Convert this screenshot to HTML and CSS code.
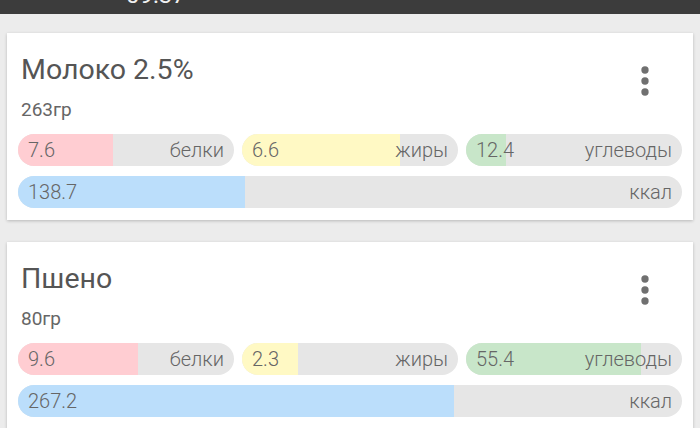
FILE: index.html
```html
<!DOCTYPE html>
<html lang="ru">
<head>
<meta charset="utf-8">
<link rel="stylesheet" href="styles.css">
</head>
<body>
<div class="statusbar"><span class="clock">09:37</span></div>
<main class="list">
  <section class="card">
    <div class="card-head">
      <div class="card-titles">
        <h2 class="title">Молоко 2.5%</h2>
        <div class="weight">263гр</div>
      </div>
      <svg class="more" viewBox="0 0 24 24" width="44" height="44"><circle cx="12" cy="6" r="2"/><circle cx="12" cy="12" r="2"/><circle cx="12" cy="18" r="2"/></svg>
    </div>
    <div class="macros">
      <div class="pill"><div class="fill pink" style="width:44%"></div><span class="val">7.6</span><span class="lbl">белки</span></div>
      <div class="pill"><div class="fill yellow" style="width:73%"></div><span class="val">6.6</span><span class="lbl">жиры</span></div>
      <div class="pill"><div class="fill green" style="width:18.5%"></div><span class="val">12.4</span><span class="lbl">углеводы</span></div>
    </div>
    <div class="pill kcal"><div class="fill blue" style="width:34.2%"></div><span class="val">138.7</span><span class="lbl">ккал</span></div>
  </section>
  <section class="card">
    <div class="card-head">
      <div class="card-titles">
        <h2 class="title">Пшено</h2>
        <div class="weight">80гр</div>
      </div>
      <svg class="more" viewBox="0 0 24 24" width="44" height="44"><circle cx="12" cy="6" r="2"/><circle cx="12" cy="12" r="2"/><circle cx="12" cy="18" r="2"/></svg>
    </div>
    <div class="macros">
      <div class="pill"><div class="fill pink" style="width:55.6%"></div><span class="val">9.6</span><span class="lbl">белки</span></div>
      <div class="pill"><div class="fill yellow" style="width:26%"></div><span class="val">2.3</span><span class="lbl">жиры</span></div>
      <div class="pill"><div class="fill green" style="width:81%"></div><span class="val">55.4</span><span class="lbl">углеводы</span></div>
    </div>
    <div class="pill kcal"><div class="fill blue" style="width:65.7%"></div><span class="val">267.2</span><span class="lbl">ккал</span></div>
  </section>
</main>
</body>
</html>
```
FILE: styles.css
```css
html, body {
  margin: 0;
  padding: 0;
}
body {
  background: #ececec;
  font-family: Roboto, "Noto Sans", sans-serif;
  overflow: hidden;
}
.statusbar {
  height: 14px;
  background: #3c3c3c;
  overflow: hidden;
  padding-left: 126px;
}
.clock {
  display: block;
  color: #f0f0f0;
  font-size: 24px;
  line-height: 24px;
  margin-top: -17px;
}
.list {
  padding: 19px 7px 0 7px;
  display: flex;
  flex-direction: column;
  gap: 22px;
}
.card {
  background: #ffffff;
  box-shadow: 0 1px 3px rgba(0, 0, 0, 0.22);
  padding: 0 11px 12px 11px;
}
.card-head {
  display: flex;
  justify-content: space-between;
  align-items: flex-start;
  padding-top: 19px;
  margin-bottom: 14px;
}
.card-titles {
  padding-left: 3px;
}
.title {
  margin: 0;
  font-size: 28.5px;
  line-height: 36px;
  font-weight: 400;
  color: #555555;
}
.weight {
  margin-top: 12px;
  font-size: 19px;
  line-height: 20px;
  font-weight: 400;
  color: #666666;
}
.more {
  fill: #707070;
  margin-top: 7px;
  margin-right: 15px;
}
.macros {
  display: grid;
  grid-template-columns: 1fr 1fr 1fr;
  gap: 8px;
  margin-bottom: 10px;
}
.pill {
  position: relative;
  height: 32px;
  border-radius: 16px;
  background: #e6e6e6;
  overflow: hidden;
  display: flex;
  justify-content: space-between;
  align-items: center;
  padding: 0 10px;
  font-size: 20px;
  font-weight: 300;
  color: #666666;
}
.fill {
  position: absolute;
  left: 0;
  top: 0;
  bottom: 0;
}
.val, .lbl {
  position: relative;
}
.pink { background: #ffcdd2; }
.yellow { background: #fff9c4; }
.green { background: #c8e6c9; }
.blue { background: #bbdefb; }
```
